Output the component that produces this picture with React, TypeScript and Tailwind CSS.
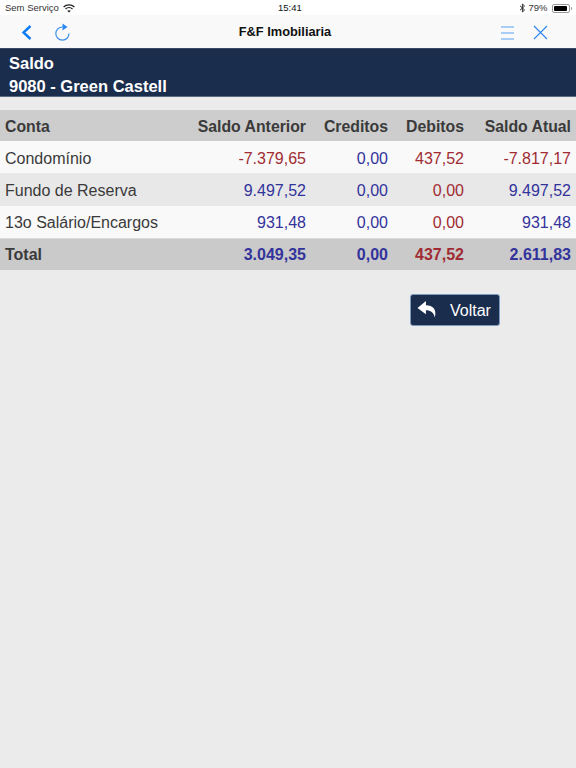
const rows = [
  { c: "Condomínio", a: ["-7.379,65", "r"], b: ["0,00", "b"], d: ["437,52", "r"], e: ["-7.817,17", "r"], bg: "bg-[#f9f9f9]" },
  { c: "Fundo de Reserva", a: ["9.497,52", "b"], b: ["0,00", "b"], d: ["0,00", "r"], e: ["9.497,52", "b"], bg: "bg-[#e8e8e8]" },
  { c: "13o Salário/Encargos", a: ["931,48", "b"], b: ["0,00", "b"], d: ["0,00", "r"], e: ["931,48", "b"], bg: "bg-[#f9f9f9]" },
];

function Num({ v, bold }: { v: string[]; bold?: boolean }) {
  const color = v[1] === "r" ? "text-[#a02c33]" : "text-[#33339c]";
  return <div className={`pr-[5px] text-right ${color} ${bold ? "font-bold" : ""}`}>{v[0]}</div>;
}

const grid = "grid grid-cols-[180px_131px_82px_76px_107px]";

export default function App() {
  return (
    <div className="flex min-h-[768px] w-[576px] flex-col bg-[#ebebeb] font-['Liberation_Sans',Arial,sans-serif]">
      <div className="relative flex h-[15px] items-center justify-between bg-white pl-[5px] pr-[3px] pt-px text-[9.5px] text-[#333]">
        <div className="flex items-center gap-[4px]">
          <span>Sem Serviço</span>
          <svg width="12" height="9" viewBox="0 0 12 9" fill="none" stroke="#222" strokeWidth="1.3">
            <path d="M0.6 3 C3.6 0.2 8.4 0.2 11.4 3" />
            <path d="M2.5 5 C4.5 3.2 7.5 3.2 9.5 5" />
            <path d="M6 8.6 L4.2 6.8 C5.2 6 6.8 6 7.8 6.8 Z" fill="#222" stroke="none" />
          </svg>
        </div>
        <span className="absolute left-[278px] font-medium text-[#111]">15:41</span>
        <div className="flex items-center gap-[2px]">
          <svg width="7" height="10" viewBox="0 0 7 10" fill="none" stroke="#333" strokeWidth="1">
            <path d="M1 2.8 L5.6 7 L3.4 9 V1 L5.6 3 L1 7.2" />
          </svg>
          <span className="mr-[2px]">79%</span>
          <div className="flex h-[9px] w-[18px] items-center rounded-[2px] border border-[#999] p-px">
            <div className="h-full w-[13px] rounded-[1px] bg-black" />
          </div>
          <div className="ml-[-1px] mr-[1px] h-[3px] w-[1.5px] rounded-r-sm bg-[#999]" />
        </div>
      </div>

      <div className="relative flex h-[33px] items-center justify-center bg-[#f9f9f9]">
        <svg className="absolute left-[21px] top-[10px]" width="11" height="15" viewBox="0 0 11 15" fill="none" stroke="#0a7cf5" strokeWidth="2.4">
          <path d="M9.5 1 L2.5 7.5 L9.5 14" />
        </svg>
        <svg className="absolute left-[54px] top-[8px]" width="17" height="18" viewBox="0 0 17 18" fill="none">
          <path d="M8.5 4 A6.6 6.6 0 1 0 15 10.5" stroke="#3b8ff0" strokeWidth="1.2" />
          <path d="M8.5 0.5 L13.5 4 L8.5 7.5 Z" fill="#2a86f0" />
        </svg>
        <span className="mr-[6px] text-[12.8px] font-bold text-[#111]">F&amp;F Imobiliaria</span>
        <svg className="absolute left-[501px] top-[11px]" width="13" height="14" viewBox="0 0 13 14" stroke="#5aa2f2" strokeWidth="1.2">
          <path d="M0 1 H13 M0 7 H13 M0 13 H13" />
        </svg>
        <svg className="absolute left-[533px] top-[10px]" width="15" height="15" viewBox="0 0 15 15" stroke="#2a86f0" strokeWidth="1.1">
          <path d="M1 1 L14 14 M14 1 L1 14" />
        </svg>
      </div>

      <div className="h-[49px] border-t border-b border-t-[#3a4a66] border-b-[#5c6a80] bg-[#1b2d4d] pl-[9px] pt-[3px] text-[16.5px] font-bold leading-[23px] text-white">
        <div>Saldo</div>
        <div>9080 - Green Castell</div>
      </div>

      <div className="mt-[13px] text-[16px] leading-[18px]">
        <div className={`${grid} h-[31px] items-center bg-[#cdcdcd] pt-[2px] text-[15.8px] font-bold text-[#3a3a3a]`}>
          <div className="pl-[5px]">Conta</div>
          <div className="pr-[5px] text-right">Saldo Anterior</div>
          <div className="pr-[5px] text-right">Creditos</div>
          <div className="pr-[5px] text-right">Debitos</div>
          <div className="pr-[5px] text-right">Saldo Atual</div>
        </div>
        {rows.map((r) => (
          <div key={r.c} className={`${grid} h-[32.3px] items-center pt-[3px] ${r.bg}`}>
            <div className="pl-[5px] text-[#3a3a3a]">{r.c}</div>
            <Num v={r.a} />
            <Num v={r.b} />
            <Num v={r.d} />
            <Num v={r.e} />
          </div>
        ))}
        <div className={`${grid} h-[32px] items-center border-t border-[#dcdcdc] bg-[#cacaca] pt-[2px]`}>
          <div className="pl-[5px] font-bold text-[#3a3a3a]">Total</div>
          <Num v={["3.049,35", "b"]} bold />
          <Num v={["0,00", "b"]} bold />
          <Num v={["437,52", "r"]} bold />
          <Num v={["2.611,83", "b"]} bold />
        </div>
      </div>

      <div className="ml-[410px] mt-[24px] flex h-[32px] w-[90px] items-center rounded-[3px] border border-[#7f9ac0] bg-[#1b2d4d] pt-[2px] text-[16px] text-white">
        <svg className="ml-[6px] mb-[3px]" width="21" height="19" viewBox="0 0 20 18" fill="#fff">
          <path d="M8.5 1 L0.5 7.5 L8.5 13.5 V9.6 C13 9.6 16 11.5 17 16.5 C19 9 15 5 8.5 5 Z" />
        </svg>
        <span className="ml-[12px]">Voltar</span>
      </div>
    </div>
  );
}
